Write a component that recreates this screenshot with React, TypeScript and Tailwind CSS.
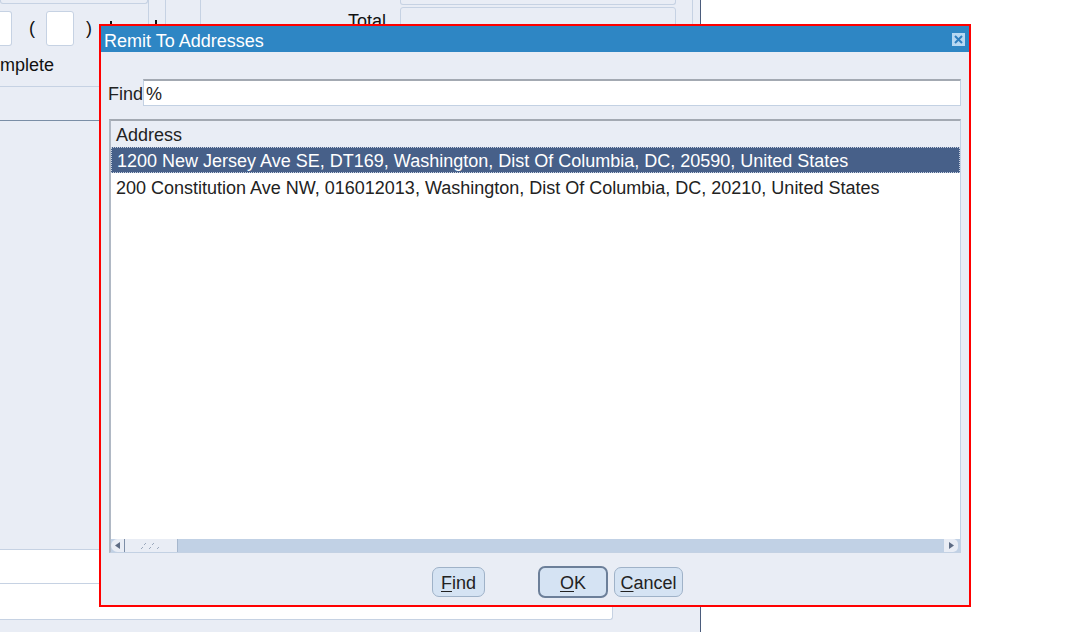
import React from 'react';

const rows = [
  '1200 New Jersey Ave SE, DT169, Washington, Dist Of Columbia, DC, 20590, United States',
  '200 Constitution Ave NW, 016012013, Washington, Dist Of Columbia, DC, 20210, United States',
];

function CloseIcon() {
  return (
    <svg width="13" height="13" viewBox="0 0 13 13">
      <rect x="0" y="0" width="13" height="13" fill="#b7d8f2" />
      <path d="M3 3 L10 10 M10 3 L3 10" stroke="#2e7fc0" strokeWidth="2" />
    </svg>
  );
}

function DlgButton({ label, w, active }: { label: string; w: string; active?: boolean }) {
  const first = label[0];
  const rest = label.slice(1);
  return (
    <button
      className={`${w} rounded-[7px] bg-[#d5e3f3] text-[18px] leading-none text-[#222] pt-[1px] ${
        active ? 'border-2 border-[#6c7f99] h-[32px]' : 'border border-[#9fb2c8] h-[30px]'
      }`}
    >
      <span className="underline underline-offset-2">{first}</span>
      {rest}
    </button>
  );
}

function Dialog() {
  return (
    <div className="absolute left-[99px] top-[24px] w-[872px] h-[583px] border-2 border-[#ff0000] bg-[#e9edf5] flex flex-col">
      <div className="h-[26px] bg-[#2e86c4] flex items-center justify-between pl-[3px] pr-[4px]">
        <span className="text-white text-[18px] leading-none pt-[3px]">Remit To Addresses</span>
        <CloseIcon />
      </div>

      <div className="flex items-center mt-[27px] pl-[7px] pr-[8px]">
        <span className="w-[35px] text-[18px] leading-none pt-[2px] text-[#222]">Find</span>
        <div className="flex-1 h-[27px] bg-white border border-[#c3d1e3] border-t-2 border-t-[#a3a9b2] flex items-center pl-[2px] pt-[1px] text-[18px] leading-none text-[#222]">
          %
        </div>
      </div>

      <div className="mt-[13px] mx-[8px] h-[434px] bg-white border border-[#c3d1e3] border-t-2 border-t-[#a3a9b2] border-l-2 border-l-[#b0b8c4] flex flex-col text-[18px] leading-none">
        <div className="h-[26px] bg-[#e9edf5] flex items-center pl-[5px] pt-[2px] text-[#222] shrink-0">
          Address
        </div>
        <div className="flex-1">
          <div className="h-[26px] bg-[#476089] border border-dotted border-[#c8d2e2] flex items-center pl-[5px] pt-[2px] text-white">
            {rows[0]}
          </div>
          <div className="h-[27px] flex items-center pl-[5px] pt-[2px] text-[#222]">{rows[1]}</div>
        </div>
        <div className="h-[13px] bg-[#c1d1e5] flex items-center shrink-0">
          <div className="w-[14px] h-[13px] bg-[#e9edf5] rounded-l-full flex items-center justify-center border-r border-[#7d8ea7]">
            <svg width="5" height="7" viewBox="0 0 5 7">
              <path d="M5 0 L0 3.5 L5 7 Z" fill="#5e6c84" />
            </svg>
          </div>
          <div className="w-[53px] h-[13px] bg-[#e9edf5] border-r border-[#a6b7cd] flex items-center justify-center">
            <svg width="20" height="8" viewBox="0 0 20 8">
              <g fill="#9aa8bc">
                <rect x="4" y="1" width="1" height="1" />
                <rect x="3" y="2" width="1" height="1" />
                <rect x="12" y="1" width="1" height="1" />
                <rect x="11" y="2" width="1" height="1" />
                <rect x="1" y="5" width="1" height="1" />
                <rect x="0" y="6" width="1" height="1" />
                <rect x="9" y="5" width="1" height="1" />
                <rect x="8" y="6" width="1" height="1" />
                <rect x="17" y="5" width="1" height="1" />
                <rect x="16" y="6" width="1" height="1" />
              </g>
            </svg>
          </div>
          <div className="flex-1" />
          <div className="w-[14px] h-[13px] bg-[#e9edf5] rounded-r-[5px] flex items-center justify-center mr-[2px]">
            <svg width="5" height="7" viewBox="0 0 5 7">
              <path d="M0 0 L5 3.5 L0 7 Z" fill="#5e6c84" />
            </svg>
          </div>
        </div>
      </div>

      <div className="flex items-center mt-[13px] h-[32px] pl-[331px]">
        <DlgButton label="Find" w="w-[53px]" />
        <div className="w-[53px]" />
        <DlgButton label="OK" w="w-[70px]" active />
        <div className="w-[6px]" />
        <DlgButton label="Cancel" w="w-[69px]" />
      </div>
    </div>
  );
}

function Background() {
  return (
    <div className="flex w-[1070px] h-[632px]">
      <div className="relative w-[701px] h-full bg-[#e9edf5] border-r border-[#4b5c7c]">
        {/* top row of form fields */}
        <div className="flex items-start h-[50px]">
          <div className="flex flex-col w-[148px]">
            <div className="h-[4px] bg-[#e9edf5] border border-t-0 border-[#c6d2e3] rounded-b-[3px]" />
            <div className="flex items-center mt-[7px] h-[35px] text-[18px] text-[#111]">
              <div className="w-[12px] h-[35px] bg-white border border-l-0 border-[#c6d2e3] rounded-r-[3px]" />
              <span className="ml-[17px]">(</span>
              <div className="ml-[11px] w-[28px] h-[35px] bg-white border border-[#c6d2e3] rounded-[3px]" />
              <span className="ml-[12px]">)</span>
              <div className="ml-[18px] self-start mt-[10px] w-[2px] h-[4px] bg-[#111]" />
            </div>
          </div>
          <div className="w-[17px] h-[50px] border-l border-[#c6d2e3] pt-[20px] pl-[6px]">
            <div className="w-[2px] h-[4px] bg-[#111]" />
          </div>
          <div className="w-[35px] h-[50px] border-l border-[#c6d2e3]" />
          <div className="w-[200px] h-[50px] border-l border-[#c6d2e3] flex justify-end pr-[14px] pt-[12px] text-[18px] leading-none text-[#111]">
            Total
          </div>
          <div className="flex flex-col w-[276px]">
            <div className="h-[5px] border border-t-0 border-[#c6d2e3] rounded-b-[3px] bg-[#e9edf5]" />
            <div className="mt-[2px] h-[40px] border border-[#c6d2e3] rounded-[3px] bg-[#e9edf5]" />
          </div>
          <div className="w-[17px] h-[50px] border-r border-[#c6d2e3]" />
        </div>
        <div className="h-[37px] pt-[6px] text-[18px] leading-none text-[#111] border-b border-[#c6d2e3] w-[110px]">
          <span>mplete</span>
        </div>
        <div className="mt-[33px] h-[1px] w-[110px] bg-[#7a8ea6]" />
        <div className="h-[428px]" />
        <div className="h-[35px] w-[110px] bg-white border-t border-b border-[#c6d2e3]" />
        <div className="h-[36px] w-[613px] bg-white border-b border-r border-[#c6d2e3] rounded-br-[3px]" />
      </div>
      <div className="flex-1 bg-white" />
    </div>
  );
}

export default function App() {
  return (
    <div className="relative w-[1070px] h-[632px] overflow-hidden font-['Liberation_Sans',Arial,sans-serif]">
      <Background />
      <Dialog />
    </div>
  );
}
